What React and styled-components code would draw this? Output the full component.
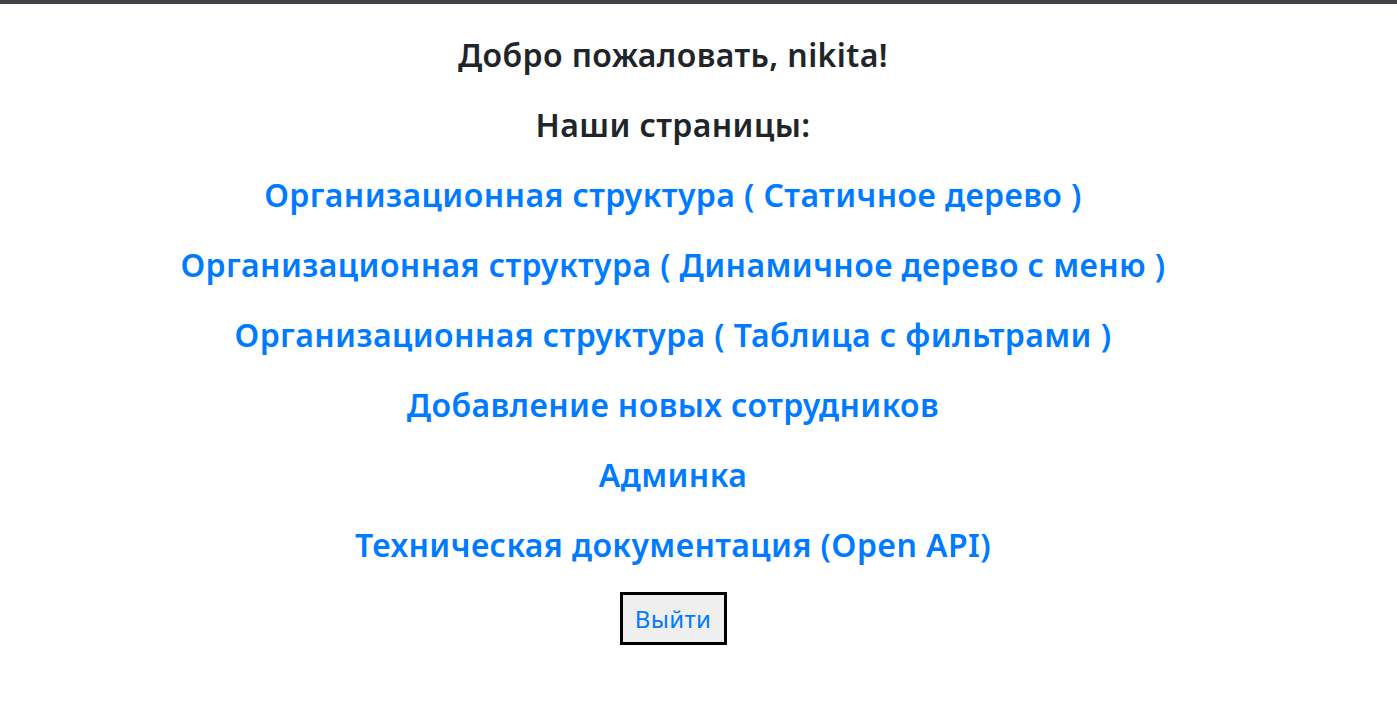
import React from "react";
import styled, { createGlobalStyle } from "styled-components";

const Global = createGlobalStyle`
  html, body { margin: 0; padding: 0; background: #fff; }
  body { font-family: "Noto Sans", "Open Sans", sans-serif; }
`;

const TopBar = styled.div`
  height: 4px;
  background: #424348;
`;

const Main = styled.main`
  display: flex;
  flex-direction: column;
  align-items: center;
  padding: 31px 51px 0 0;
`;

const List = styled.div`
  display: flex;
  flex-direction: column;
  align-items: center;
  gap: 30px;
`;

const Title = styled.h2`
  margin: 0;
  font-size: 32px;
  line-height: 40px;
  letter-spacing: 0.4px;
  font-weight: 600;
  color: #212529;
`;

const NavLink = styled.a`
  font-size: 32px;
  line-height: 40px;
  letter-spacing: 0.4px;
  font-weight: 600;
  color: #007bff;
  text-decoration: none;
`;

const LogoutButton = styled.button`
  margin-top: 27px;
  box-sizing: border-box;
  width: 107px;
  height: 53px;
  border: 3px solid #000;
  background: #efefef;
  color: #007bff;
  font-family: "Noto Sans", "Open Sans", sans-serif;
  font-size: 24px;
  letter-spacing: 0.3px;
  padding: 0;
  cursor: pointer;
`;

const links = [
  "Организационная структура ( Статичное дерево )",
  "Организационная структура ( Динамичное дерево с меню )",
  "Организационная структура ( Таблица с фильтрами )",
  "Добавление новых сотрудников",
  "Админка",
  "Техническая документация (Open API)",
];

export default function App() {
  return (
    <>
      <Global />
      <TopBar />
      <Main>
        <List>
          <Title>Добро пожаловать, nikita!</Title>
          <Title>Наши страницы:</Title>
          {links.map((l) => (
            <NavLink key={l} href="#">{l}</NavLink>
          ))}
        </List>
        <LogoutButton>Выйти</LogoutButton>
      </Main>
    </>
  );
}
